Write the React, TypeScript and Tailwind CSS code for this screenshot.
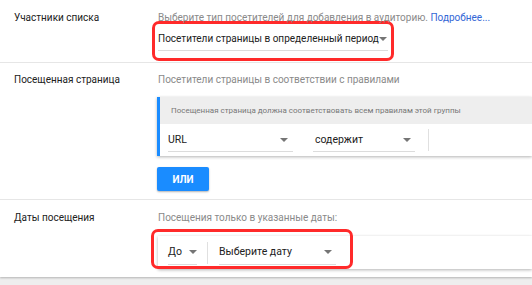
import React from "react";

function Caret() {
  return <span className="inline-block w-0 h-0 border-x-[4px] border-x-transparent border-t-[4px] border-t-[#757575]" />;
}

function Select({ label, width, className = "", size = "text-[10.5px]" }: { label: string; width: string; className?: string; size?: string }) {
  return (
    <div className={`flex items-center justify-between border-b border-[#dcdcdc] h-[24px] whitespace-nowrap ${width} ${className}`}>
      <span className={`${size} text-[#212121]`}>{label}</span>
      <Caret />
    </div>
  );
}

export default function App() {
  return (
    <div className="w-[532px] h-[285px] bg-[#eeeeee] overflow-hidden" style={{ fontFamily: "Roboto, 'Noto Sans', sans-serif" }}>
      <div className="bg-white h-[277px] shadow-[0_1px_2px_rgba(0,0,0,0.25)]">
        {/* Участники списка */}
        <div className="flex h-[63px] border-b border-[#e6e6e6]">
          <div className="w-[158px] pl-[14px] pt-[10px] text-[10px] text-[#212121]">Участники списка</div>
          <div className="flex-1 pt-[10px]">
            <div className="text-[10px] text-[#8a8a8a]">
              Выберите тип посетителей для добавления в аудиторию.{" "}
              <span className="text-[#3367d6]">Подробнее...</span>
            </div>
            <div className="ml-[-6px] mt-[-4px] w-[242px] h-[40px] border-[3px] border-[#ff2a2a] rounded-[7px] pl-[3px] pt-[3px]">
              <Select label="Посетители страницы в определенный период" width="w-[230px]" className="pr-[3px]" size="text-[10px]" />
            </div>
          </div>
        </div>

        {/* Посещенная страница */}
        <div className="flex h-[137px] border-b border-[#e6e6e6]">
          <div className="w-[158px] pl-[14px] pt-[9px] text-[10px] text-[#212121]">Посещенная страница</div>
          <div className="flex-1 pt-[9px]">
            <div className="text-[10px] text-[#8a8a8a]">Посетители страницы в соответствии с правилами</div>
            <div className="mt-[10px] ml-[-1px] border-l-[3px] border-[#1a8cff] shadow-[0_1px_3px_rgba(0,0,0,0.3)] bg-white">
              <div className="h-[27px] bg-[#eeeeee] pl-[11px] flex items-center text-[8px] text-[#777777]">
                Посещенная страница должна соответствовать всем правилам этой группы
              </div>
              <div className="h-[32px] flex items-center pl-[8px]">
                <Select label="URL" width="w-[125px]" className="pr-[5px]" />
                <Select label="содержит" width="w-[102px]" className="ml-[20px] pl-[2px] pr-[4px]" />
                <div className="ml-[13px] w-px h-[22px] bg-[#e0e0e0]" />
              </div>
            </div>
            <div className="mt-[11px] ml-[-1px] w-[52px] h-[24px] bg-[#1a8cff] shadow-[0_1px_2px_rgba(0,0,0,0.3)] rounded-[2px] flex items-center justify-center text-white text-[10px] font-bold">
              ИЛИ
            </div>
          </div>
        </div>

        {/* Даты посещения */}
        <div className="flex h-[77px]">
          <div className="w-[158px] pl-[14px] pt-[10px] text-[10px] text-[#212121]">Даты посещения</div>
          <div className="flex-1 pt-[10px]">
            <div className="text-[10px] text-[#8a8a8a]">Посещения только в указанные даты:</div>
            <div className="relative mt-[11px] h-[33px] bg-white shadow-[0_1px_3px_rgba(0,0,0,0.3)] flex items-center pl-[10px]">
              <Select label="До" width="w-[29px]" />
              <div className="ml-[10px] w-px h-[22px] bg-[#e0e0e0]" />
              <Select label="Выберите дату" width="w-[117px]" className="ml-[11px] pr-[4px]" />
              <div className="absolute left-[-7px] top-[-7px] w-[202px] h-[40px] border-[3px] border-[#ff2a2a] rounded-[7px]" />
            </div>
          </div>
        </div>
      </div>
    </div>
  );
}
